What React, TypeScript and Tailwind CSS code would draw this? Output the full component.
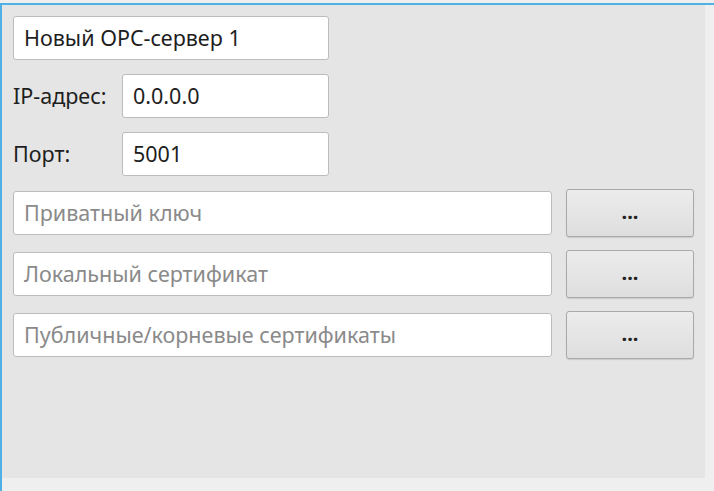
const field =
  "h-[44px] bg-white border border-[#bcbcbc] rounded-[3px] flex items-center px-[10px] text-[21.5px] text-[#1e1e1e]"

function Browse() {
  return (
    <button className="w-[128px] h-[48px] shrink-0 rounded-[3px] border border-[#a9a9a9] bg-gradient-to-b from-[#ececec] to-[#dedede] shadow-[0_1px_1px_rgba(0,0,0,0.12)] flex items-center justify-center text-[20px] font-bold text-[#222] leading-none pb-[2px]">
      ...
    </button>
  )
}

function FileRow({ placeholder }: { placeholder: string }) {
  return (
    <div className="flex items-center gap-[14px] h-[48px]">
      <div className={`${field} w-[539px] text-[#8a8a8a]`}>{placeholder}</div>
      <Browse />
    </div>
  )
}

export default function App() {
  return (
    <div className="w-[714px] h-[491px] bg-[#efefef] pt-[3px] overflow-hidden font-['Noto_Sans',sans-serif]">
      <div className="h-[488px] border-t-2 border-l-2 border-[#4fb0e6]">
        <div className="w-[703px] h-[473px] bg-[#e5e5e5] pl-[11px] pt-[11px] flex flex-col">
          <div className={`${field} w-[316px]`}>Новый OPC-сервер 1</div>

          <div className="flex items-center mt-[14px]">
            <span className="w-[109px] text-[21.5px] text-[#1e1e1e]">IP-адрес:</span>
            <div className={`${field} w-[207px]`}>0.0.0.0</div>
          </div>

          <div className="flex items-center mt-[14px]">
            <span className="w-[109px] text-[21.5px] text-[#1e1e1e]">Порт:</span>
            <div className={`${field} w-[207px]`}>5001</div>
          </div>

          <div className="flex flex-col gap-[13px] mt-[13px]">
            <FileRow placeholder="Приватный ключ" />
            <FileRow placeholder="Локальный сертификат" />
            <FileRow placeholder="Публичные/корневые сертификаты" />
          </div>
        </div>
      </div>
    </div>
  )
}
